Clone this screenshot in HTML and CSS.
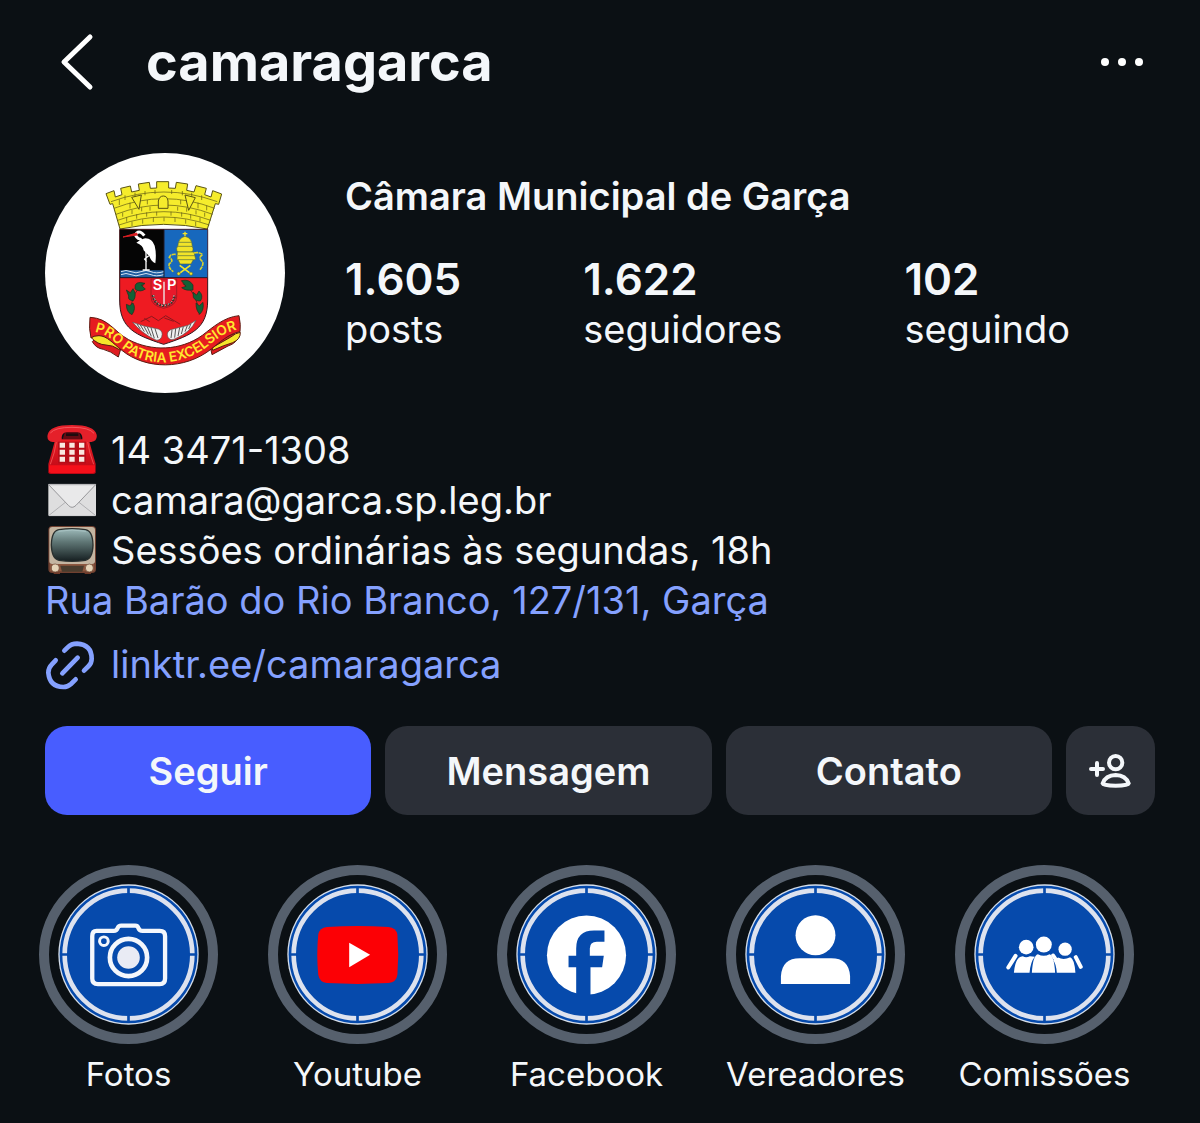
FILE: index.html
```html
<!DOCTYPE html>
<html lang="pt-BR">
  <head>
    <meta charset="UTF-8" />
    <meta name="viewport" content="width=device-width, initial-scale=1.0" />
    <title>camaragarca</title>
    <link rel="stylesheet" href="styles.css">
  </head>
  <body>
    <!-- Shared blue disc used by every highlight -->
    <svg class="defs" aria-hidden="true">
      <symbol id="disc" viewBox="-212 -212 424 424">
        <circle r="211" fill="#d5deea" />
        <circle r="207" fill="#064aac" />
        <circle r="192" fill="none" stroke="#dde2ee" stroke-width="14" />
        <path d="M0-206V-180M0 206V180M-206 0H-180M206 0H180" stroke="#064aac" stroke-width="8" />
      </symbol>
    </svg>

    <header class="header">
      <button class="icon-button" type="button" aria-label="Voltar">
        <svg class="back-icon" viewBox="0 0 34 58"><path d="M30 4L4 29L30 54" /></svg>
      </button>
      <h1 class="username">camaragarca</h1>
      <button class="icon-button" type="button" aria-label="Mais">
        <svg class="more-icon" viewBox="0 0 44 10">
          <circle cx="5" cy="5" r="4" /><circle cx="22" cy="5" r="4" /><circle cx="39" cy="5" r="4" />
        </svg>
      </button>
    </header>

    <main>
      <section class="profile">
        <svg class="avatar" viewBox="15 24 720 720" role="img" aria-label="Brasão de Garça">
          <circle cx="375" cy="384" r="360" fill="#fff" />
          <!-- Mural crown -->
          <g fill="#f5ec2c" stroke="#5a5414" stroke-width="3">
            <path d="M198 146L222 137L226 156L246 149L242 130L271 123L275 141L298 136L295 117L328 112L331 130L350 129V110H386V129L406 130L409 112L443 117L440 136L462 141L468 122L499 130L494 149L513 156L518 137L545 147L536 178L526 176L502 252Q371 224 240 252L218 176L210 178Z" />
            <path d="M213 170Q371 112 532 170M222 190Q371 132 524 190M228 208Q371 152 518 208M233 226Q371 174 512 226M237 240Q371 192 508 240" fill="none" stroke-width="2" />
            <path d="M255 151V165M285 143V157M315 138V151M345 135V147M395 135V147M427 138V151M455 143V157M485 151V165M238 163V180M270 173V190M322 165V178M422 165V178M474 173V190M500 182V196M248 203V215M276 195V207M305 187V199M330 185V197M413 185V197M440 188V200M468 196V208M494 203V215M260 217V230M290 208V221M320 202V215M350 200V212M393 200V212M425 202V215M452 208V221M480 217V230M276 230V243M308 223V236M340 218V231M372 217V229M405 218V231M437 223V236M467 230V243" fill="none" stroke-width="2" />
            <path d="M275 157L304 150L297 193ZM435 150L466 158L446 196ZM355 190V168Q358 153 370 153Q382 153 384 168V190Z" />
          </g>
          <!-- Shield -->
          <path d="M239 253H503V465C503 552 455 570 371 598C287 570 239 552 239 465Z" fill="#ee1b22" stroke="#35151b" stroke-width="3" />
          <path d="M240 254H372V398H240Z" fill="#050505" />
          <path d="M372 254H502V398H372Z" fill="#1768bd" />
          <path d="M241 376H372V398H241Z" fill="#1f5ea0" />
          <path d="M243 380q15-7 30 0t30 0t30 0t38 0M243 389q15-7 30 0t30 0t30 0t38 0" fill="none" stroke="#d5e4f3" stroke-width="3" />
          <path d="M240 398H502M372 254V398" stroke="#201a2a" stroke-width="3" />
          <!-- Heron -->
          <path d="M313 272Q300 255 290 264Q282 272 296 281Q311 285 298 295" fill="none" stroke="#fff" stroke-width="9" />
          <path d="M249 276L290 264L292 270Z" fill="#d91e22" stroke="#d91e22" stroke-width="3" />
          <path d="M289 293Q305 282 316 280Q337 281 344 302Q350 326 346 355Q334 350 328 334L311 316Q310 301 289 293Z" fill="#fff" />
          <path d="M318 320V374M326 332L314 342L320 350M308 375H329" fill="none" stroke="#fff" stroke-width="4" />
          <!-- Papal tiara and keys -->
          <g fill="#f2e429" stroke="#4e6842" stroke-width="2">
            <path d="M435 260V276M428 266H442" stroke="#f2e429" stroke-width="4" />
            <path d="M413 307Q414 278 435 274Q457 278 457 307Z" />
            <rect x="410" y="304" width="49" height="17" rx="6" />
            <path d="M412 321H462L467 343Q440 354 411 344Z" />
            <path d="M414 344H460L453 357H420Z" />
            <path d="M417 292H454M414 332H464" />
            <path d="M407 328Q392 326 388 337Q403 347 388 356Q384 369 400 380M462 324Q477 320 488 329Q472 338 488 350Q491 361 480 374" fill="none" stroke="#d9d02d" stroke-width="5" stroke-dasharray="12 2" />
            <path d="M417 386L451 361M452 386L419 361" stroke="#f2e429" stroke-width="5" />
            <circle cx="416" cy="386" r="5" /><circle cx="453" cy="386" r="5" />
          </g>
          <!-- Small SP shield with laurels -->
          <path d="M333 402H410V456Q410 482 371 490Q333 482 333 456Z" fill="#e8192b" stroke="#851b23" stroke-width="2" />
          <path d="M339 450Q343 480 371 482Q400 480 404 450" fill="none" stroke="#3d342c" stroke-width="8" stroke-dasharray="6 3" />
          <path d="M341 450Q345 477 371 482Q399 477 402 450" fill="none" stroke="#ddd" stroke-width="3" stroke-dasharray="4 6" />
          <path d="M372 410V478" stroke="#eee" stroke-width="4" />
          <text class="sp" x="338" y="436">S</text>
          <text class="sp" x="381" y="436">P</text>
          <g fill="#126136" stroke="#192f1e" stroke-width="2">
            <path d="M313 418Q277 432 270 506M428 416Q470 435 478 510" fill="none" />
            <path d="M285 431Q282 405 315 415L304 421L316 432Q301 443 286 433ZM259 435L271 443L279 431Q292 450 280 467Q262 466 266 453ZM259 478L269 482L279 474Q289 490 276 509Q259 502 259 478ZM424 407Q448 401 459 420L459 435Q436 438 425 428L438 424ZM459 442L470 450L477 438Q492 453 481 468Q466 469 460 457ZM468 474L478 482L489 472Q493 494 480 507Q468 499 468 474Z" />
          </g>
          <!-- Hills and cornucopias -->
          <path d="M302 530L335 514L355 527L377 512L421 538M313 520L329 530M373 519L401 529" fill="none" stroke="#8b171d" stroke-width="3" />
          <g stroke="#555" stroke-width="2" fill="#f0f0f0">
            <path d="M278 532L312 543L355 552Q371 559 365 576Q357 591 343 583Q306 565 278 532Z" />
            <path d="M468 526L444 541L392 554Q377 562 384 577Q391 589 406 581Q452 562 468 526Z" />
            <path d="M291 537L301 552M301 540L313 560M312 544L325 568M322 546L334 574M333 548L343 580M345 551L354 579M453 536L446 552M442 542L435 560M430 545L424 567M419 548L414 573M407 551L404 578M396 555L393 579" fill="none" stroke-width="3" />
          </g>
          <!-- Motto ribbon -->
          <g stroke="#5b1c12" stroke-width="3">
            <path d="M157 590Q168 610 190 613Q211 618 235 636L243 609L240 594L175 571ZM598 570Q590 595 564 603L516 629L511 606L524 589L580 567Z" fill="#df1b20" />
            <path d="M153 577Q175 563 205 578L242 605L238 614Q218 600 198 600Q172 599 153 577ZM601 562Q588 563 571 577L516 608L518 616Q551 601 578 593Q602 583 601 562Z" fill="#f6e52a" />
            <path d="M150 517C207 520 220 559 266 584C334 620 421 618 487 571C517 548 552 516 597 512Q603 540 600 560C565 567 538 593 514 612C433 676 316 673 247 617C217 594 202 573 177 572Q160 572 153 579Q146 552 150 517Z" fill="#e61c20" />
          </g>
          <path id="motto-line" d="M164 561C208 566 230 602 272 627C340 664 420 660 492 612C528 584 552 561 600 552" fill="none" />
          <text class="motto"><textPath href="#motto-line">PRO PATRIA EXCELSIOR</textPath></text>
        </svg>

        <div class="profile-info">
          <h2 class="name">Câmara Municipal de Garça</h2>
          <ul class="stats">
            <li><strong>1.605</strong><span>posts</span></li>
            <li><strong>1.622</strong><span>seguidores</span></li>
            <li><strong>102</strong><span>seguindo</span></li>
          </ul>
        </div>
      </section>

      <section class="bio">
        <p class="bio-line">
          <svg class="bio-icon" viewBox="0 0 150 150" aria-hidden="true">
            <defs>
              <linearGradient id="phone" x2="0" y2="1"><stop stop-color="#e91c24" /><stop offset="1" stop-color="#bb0715" /></linearGradient>
            </defs>
            <path d="M25 43H125L146 117V142Q146 147 139 147H11Q4 147 4 142V117Z" fill="url(#phone)" />
            <path d="M29 46Q23 86 10 118M121 46Q127 86 140 118" fill="none" stroke="#f04a4d" stroke-width="3" />
            <path d="M54 20H96L103 42H47Z" fill="#650b13" />
            <path d="M6 121H144V139Q144 144 137 144H13Q6 144 6 139Z" fill="#f5101a" />
            <path d="M2 29Q8 0 75 0Q142 0 149 29Q152 49 133 51H114Q105 50 106 37Q103 22 91 21H60Q46 22 44 37Q46 50 35 51H17Q-2 49 2 29Z" fill="#e5202a" />
            <path d="M10 24Q24 7 75 7Q127 7 141 25" fill="none" stroke="#f5575c" stroke-width="3" />
            <path d="M57 29H94" stroke="#1e0b0e" stroke-width="8" />
            <path d="M33 50H117V115H33Z" fill="#b80d18" />
            <path d="M38 61H54M67 61H83M96 61H112M38 82H54M67 82H83M96 82H112M38 103H54M67 103H83M96 103H112" stroke="#f9e8e0" stroke-width="15" />
          </svg>
          <span>14 3471-1308</span>
        </p>
        <p class="bio-line">
          <svg class="bio-icon" viewBox="0 0 150 150" aria-hidden="true">
            <rect x="4" y="27" width="143" height="96" rx="3" fill="#dededf" />
            <path d="M6 121L60 78M145 121L91 78" stroke="#b0b0b3" stroke-width="3" />
            <path d="M5 29L64 91Q75 103 87 91L146 29Z" fill="#e9e9ea" stroke="#98989b" stroke-width="3" />
            <path d="M5 28H146M6 122H145" stroke="#c9c9cc" stroke-width="2" />
          </svg>
          <span>camara@garca.sp.leg.br</span>
        </p>
        <p class="bio-line">
          <svg class="bio-icon" viewBox="0 0 150 150" aria-hidden="true">
            <defs>
              <linearGradient id="screen" x2="0" y2="1"><stop stop-color="#9ebbbb" /><stop offset=".4" stop-color="#607776" /><stop offset="1" stop-color="#151e20" /></linearGradient>
            </defs>
            <path d="M20 138H39V147H20ZM113 138H132V147H113Z" fill="#703927" />
            <rect x="4" y="3" width="143" height="141" rx="12" fill="#704030" />
            <rect x="7" y="6" width="137" height="111" rx="9" fill="#c4b5a1" />
            <path d="M36 14Q75 8 115 14Q137 17 138 60Q137 101 115 106Q75 112 36 106Q14 101 13 60Q14 17 36 14Z" fill="url(#screen)" stroke="#29302f" stroke-width="4" />
            <path d="M34 19Q75 11 117 19" fill="none" stroke="#a8c2c2" stroke-width="3" />
            <path d="M9 117H142V139H9Z" fill="#8d573f" />
            <path d="M40 122H111L106 140H45Z" fill="#493c2e" />
            <circle cx="25" cy="129" r="12" fill="#e5d4b8" stroke="#66432f" stroke-width="2" />
            <circle cx="127" cy="129" r="12" fill="#e5d4b8" stroke="#66432f" stroke-width="2" />
          </svg>
          <span>Sessões ordinárias às segundas, 18h</span>
        </p>
        <p class="bio-line"><a href="#endereco">Rua Barão do Rio Branco, 127/131, Garça</a></p>
        <p class="bio-line bio-link">
          <svg class="bio-icon link-icon" viewBox="0 0 150 150" aria-hidden="true">
            <path d="M52 35L62 25Q73 14 90 14Q134 17 134 59Q134 72 125 81L111 95M26 64L14 77Q4 87 4 101Q8 143 49 144Q62 144 72 135L86 121M46 103L92 56" />
          </svg>
          <a href="https://linktr.ee/camaragarca">linktr.ee/camaragarca</a>
        </p>
      </section>

      <div class="actions">
        <button class="action follow" type="button">Seguir</button>
        <button class="action" type="button">Mensagem</button>
        <button class="action" type="button">Contato</button>
        <button class="action suggest" type="button" aria-label="Contas sugeridas">
          <svg class="suggest-icon" viewBox="0 0 126 102">
            <path d="M6 45H42M24 27V63" />
            <circle cx="80" cy="26" r="20" />
            <path d="M41 88Q50 64 80 63Q110 64 119 88Q117 95 80 95Q43 95 41 88Z" />
          </svg>
        </button>
      </div>

      <nav class="highlights" aria-label="Destaques">
        <a class="highlight" href="#fotos">
          <span class="ring">
            <svg class="cover" viewBox="-212 -212 424 424" aria-hidden="true">
              <use href="#disc" x="-212" y="-212" width="424" height="424" />
              <path d="M-96-71H-44Q-36-71-33-79Q-30-87-22-87H20Q28-87 30-79Q33-71 42-71H94Q110-71 110-55V72Q110 89 94 89H-92Q-109 89-109 72V-55Q-109-71-96-71Z" fill="none" stroke="#f4f7fc" stroke-width="13" />
              <circle cx="-74" cy="-40" r="13" fill="none" stroke="#f4f7fc" stroke-width="9" />
              <circle cy="9" r="56" fill="none" stroke="#f4f7fc" stroke-width="14" />
              <circle cy="9" r="34" fill="#e9ebf4" />
            </svg>
          </span>
          <span class="label">Fotos</span>
        </a>
        <a class="highlight" href="#youtube">
          <span class="ring">
            <svg class="cover" viewBox="-212 -212 424 424" aria-hidden="true">
              <use href="#disc" x="-212" y="-212" width="424" height="424" />
              <path d="M-92-83Q0-89 93-83Q116-81 120-60Q125 0 120 61Q117 84 93 86Q0 91-92 86Q-114 84-118 61Q-124 0-118-60Q-114-81-92-83Z" fill="#fc0005" />
              <path d="M-25-35L38 1L-25 38Z" fill="#fff" />
            </svg>
          </span>
          <span class="label">Youtube</span>
        </a>
        <a class="highlight" href="#facebook">
          <span class="ring">
            <svg class="cover" viewBox="-212 -212 424 424" aria-hidden="true">
              <use href="#disc" x="-212" y="-212" width="424" height="424" />
              <circle cy="2" r="119" fill="#fff" />
              <path d="M-31 126V38H-54V4H-31V-18Q-31-72 23-72H54V-38H31Q10-38 10-18V4H52L47 38H12V126Z" fill="#064aac" />
            </svg>
          </span>
          <span class="label">Facebook</span>
        </a>
        <a class="highlight" href="#vereadores">
          <span class="ring">
            <svg class="cover" viewBox="-212 -212 424 424" aria-hidden="true">
              <use href="#disc" x="-212" y="-212" width="424" height="424" />
              <circle cy="-58" r="60" fill="#fff" />
              <path d="M-104 89V65Q-101 11-47 11H47Q101 11 104 65V89Z" fill="#fff" />
            </svg>
          </span>
          <span class="label">Vereadores</span>
        </a>
        <a class="highlight" href="#comissoes">
          <span class="ring">
            <svg class="cover" viewBox="-212 -212 424 424" aria-hidden="true">
              <use href="#disc" x="-212" y="-212" width="424" height="424" />
              <g fill="#fff">
                <circle cx="-55" cy="-22" r="22" /><circle cx="62" cy="-16" r="20" />
                <path d="M-92 55Q-88 6-65 5Q-56 11-44 5L-29 7Q-42 22-45 55ZM37 55Q35 27 26 17L41 9Q58 18 77 8Q90 12 93 55Z" />
                <path d="M-87 4L-109 39M94 8L109 37M26 3L34 15" fill="none" stroke="#fff" stroke-width="12" stroke-linecap="round" />
                <circle cx="-2" cy="-30" r="24" />
                <path d="M-38 55Q-35 3-20-1Q-2 9 15-1Q29 3 32 55Z" />
              </g>
            </svg>
          </span>
          <span class="label">Comissões</span>
        </a>
      </nav>
    </main>
  </body>
</html>
```

FILE: styles.css
```css
/* Reset some default styles */
body,
h1,
h2,
p,
ul {
  margin: 0;
  padding: 0;
}

body {
  background-color: #0b1014;
  color: #f4f7fa;
  font-family: Inter, "Liberation Sans", sans-serif;
  font-size: 38px;
  line-height: 50px;
}

button {
  border: 0;
  padding: 0;
  background: none;
  color: inherit;
  font: inherit;
  cursor: pointer;
}

a {
  color: #85a1ff;
  text-decoration: none;
}

svg {
  display: block;
}

.defs {
  width: 0;
  height: 0;
  position: absolute;
}

/* Header styles */
.header {
  display: flex;
  align-items: center;
  padding: 24px 56px 0 60px;
}

.username {
  flex: 1;
  margin-left: 52px;
  font-size: 54px;
  font-weight: 700;
  line-height: 76px;
}

.back-icon {
  width: 34px;
  height: 58px;
  fill: none;
  stroke: #fff;
  stroke-width: 5;
  stroke-linecap: round;
  stroke-linejoin: round;
}

.more-icon {
  width: 44px;
  height: 10px;
  fill: #fff;
}

/* Profile styles */
.profile {
  display: flex;
  gap: 60px;
  padding: 53px 45px 0;
}

.avatar {
  width: 240px;
  height: 240px;
  flex: none;
}

.sp {
  fill: #fff;
  font-size: 44px;
  font-weight: 600;
}

.motto {
  fill: #ffe82e;
  font-size: 41px;
  font-weight: 600;
}

.profile-info {
  padding-top: 18px;
}

.name {
  font-size: 38px;
  font-weight: 600;
  line-height: 50px;
}

.stats {
  display: flex;
  gap: 122px;
  margin-top: 33px;
  list-style: none;
}

.stats strong,
.stats span {
  display: block;
}

.stats strong {
  font-size: 44px;
  font-weight: 600;
}

/* Bio styles */
.bio {
  padding: 32px 45px 0;
}

.bio-line {
  display: flex;
  align-items: center;
  gap: 14px;
}

.bio-icon {
  width: 50px;
  height: 50px;
  margin-left: 2px;
  flex: none;
}

.bio-link {
  margin-top: 14px;
}

.link-icon {
  overflow: visible;
  fill: none;
  stroke: #85a1ff;
  stroke-width: 14;
  stroke-linecap: round;
}

/* Action buttons */
.actions {
  display: flex;
  gap: 14px;
  padding: 37px 45px 0;
}

.action {
  flex: 1;
  height: 89px;
  border-radius: 22px;
  background-color: #2b2f37;
  font-weight: 600;
}

.follow {
  background-color: #485dff;
}

.suggest {
  display: flex;
  flex: 0 0 89px;
  align-items: center;
  justify-content: center;
}

.suggest-icon {
  width: 42px;
  height: 34px;
  fill: none;
  stroke: #f4f7fa;
  stroke-width: 12;
  stroke-linecap: round;
}

/* Highlights */
.highlights {
  display: flex;
  gap: 50px;
  padding: 50px 39px 24px;
}

.highlight {
  display: flex;
  flex: none;
  flex-direction: column;
  align-items: center;
  width: 179px;
  color: #f4f7fa;
}

.ring {
  padding: 9px;
  border: 10px solid #56606d;
  border-radius: 50%;
}

.cover {
  width: 141px;
  height: 141px;
}

.label {
  margin-top: 10px;
  font-size: 33px;
  line-height: 40px;
}
```
